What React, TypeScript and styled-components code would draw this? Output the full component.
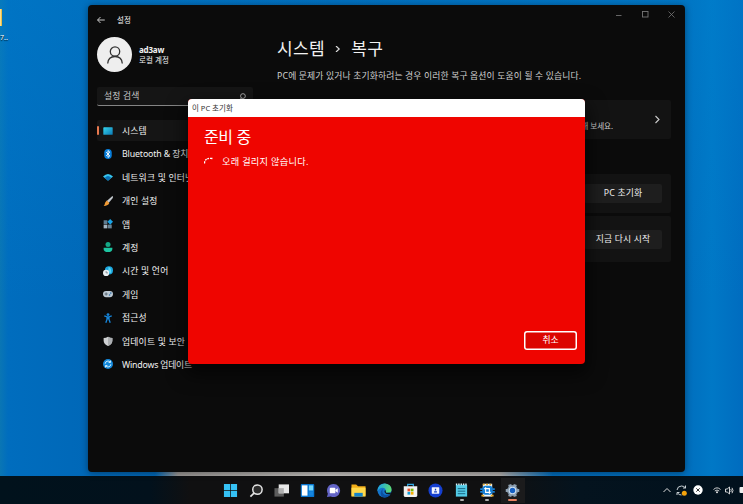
import React from 'react';
import styled, { createGlobalStyle } from 'styled-components';

const GlobalStyle = createGlobalStyle`
    * {
        box-sizing: border-box;
    }
    body {
        margin: 0;
        overflow: hidden;
        font-family: "Noto Sans", "Noto Sans CJK KR", sans-serif;
    }
    svg {
        display: block;
        flex: none;
    }
`;

const Desktop = styled.div`
    position: relative;
    display: flex;
    flex-direction: column;
    justify-content: flex-end;
    width: 743px;
    height: 504px;
    overflow: hidden;
    background:
        linear-gradient(90deg, rgba(170, 168, 167, 0) 155px, #9b9896 178px, #c4c1be 330px, #b3b0ae 500px, rgba(160, 165, 172, 0) 553px) 0 470px / 743px 6px no-repeat,
        linear-gradient(180deg, rgba(0, 130, 208, 0.35) 0, rgba(0, 110, 190, 0) 300px),
        linear-gradient(90deg, #0a76b4 0, #006dbe 8px, #0068b8 85px, #0066b6 350px, #0070bf 690px, #0078c6 712px, #006cbf 743px);
`;

const DesktopFile = styled.div`
    position: absolute;
    left: 0;
    top: 9px;
    width: 9px;
    color: #fff;
    font-size: 7px;
    line-height: 9px;
    text-shadow: 0 1px 1px #000;
`;

const FileThumb = styled.div`
    width: 2px;
    height: 17px;
    margin-bottom: 7px;
    background: #ffe08a;
    border-right: 1px solid #e9bd4a;
`;

const SettingsWindow = styled.section`
    position: absolute;
    left: 88px;
    top: 5px;
    display: flex;
    width: 597px;
    height: 467px;
    color: #f2f2f2;
    background: #0b0b0b;
    border-radius: 4px;
    box-shadow: 0 1px 7px rgba(0, 0, 0, 0.42);
`;

const Sidebar = styled.aside`
    width: 165px;
    padding: 9px 0 0 9px;
`;

const BackRow = styled.div`
    display: flex;
    align-items: center;
    gap: 12px;
    height: 12px;
    font-size: 7.5px;
    line-height: 12px;
`;

const Profile = styled.div`
    display: flex;
    align-items: center;
    gap: 7px;
    height: 35px;
    margin-top: 11px;
`;

const Avatar = styled.div`
    display: flex;
    align-items: center;
    justify-content: center;
    width: 35px;
    height: 35px;
    border-radius: 50%;
    background: #eee;
`;

const UserName = styled.div`
    font-size: 8px;
    font-weight: 700;
    line-height: 10px;
    letter-spacing: -0.2px;
`;

const UserKind = styled.div`
    font-size: 7.5px;
    line-height: 10px;
    letter-spacing: 0.1px;
`;

const SearchBox = styled.div`
    display: flex;
    align-items: center;
    justify-content: space-between;
    width: 156px;
    height: 19px;
    margin-top: 15px;
    padding: 0 7px 0 7px;
    color: #c9c9c9;
    font-size: 8.8px;
    line-height: 19px;
    letter-spacing: 0.15px;
    background: #151515;
    border-bottom: 1px solid #858585;
    border-radius: 2px;
`;

const Nav = styled.nav`
    display: flex;
    flex-direction: column;
    gap: 2.4px;
    margin-top: 14px;
`;

const NavItem = styled.div<{ $active?: boolean }>`
    display: flex;
    align-items: center;
    width: 156px;
    height: 21px;
    font-size: 8.8px;
    line-height: 20px;
    white-space: nowrap;
    border-radius: 2px;
    background: ${({ $active }) => ($active ? '#151515' : 'transparent')};

    &::before {
        content: "";
        width: 2px;
        height: 9px;
        margin-right: 4px;
        border-radius: 1px;
        background: ${({ $active }) => ($active ? '#e8794f' : 'transparent')};
    }
`;

const NavLabel = styled.span<{ $spacing?: number }>`
    margin: 1px 0 0 9px;
    letter-spacing: ${({ $spacing = 0.2 }) => $spacing}px;
`;

const Main = styled.main`
    flex: 1;
    padding: 5px 14px 0 24px;
`;

const CaptionButtons = styled.div`
    display: flex;
    justify-content: flex-end;
    align-items: center;
    gap: 19.500px;
    height: 8px;
    margin-right: -4px;
`;

const Title = styled.h1`
    display: flex;
    align-items: center;
    gap: 10px;
    height: 24px;
    margin: 19px 0 0;
    font-size: 17px;
    font-weight: 400;
    line-height: 24px;
    letter-spacing: 0.4px;
    white-space: nowrap;
`;

const Description = styled.p`
    height: 14px;
    margin: 8px 0 16.500px;
    color: #d0d0d0;
    font-size: 8.8px;
    line-height: 14px;
    letter-spacing: 0.15px;
    white-space: nowrap;
`;

const Card = styled.div<{ $height: number; $gap?: number }>`
    display: flex;
    align-items: center;
    justify-content: flex-end;
    height: ${({ $height }) => $height}px;
    margin-bottom: ${({ $gap = 0 }) => $gap}px;
    padding: 0 9px;
    background: #131313;
    border-radius: 2px;
`;

const CardHint = styled.span`
    margin: 13px 40px 0 0;
    color: #cfcfcf;
    font-size: 7.5px;
    line-height: 12px;
`;

const CardButton = styled.button`
    width: 78px;
    height: 19px;
    padding: 0;
    color: #f0f0f0;
    font: inherit;
    font-size: 8.8px;
    line-height: 19px;
    letter-spacing: 0.2px;
    background: #1e1e1e;
    border: 0;
    border-radius: 2px;
`;

const Dialog = styled.section`
    position: absolute;
    left: 188px;
    top: 99px;
    display: flex;
    flex-direction: column;
    width: 397px;
    height: 265px;
    overflow: hidden;
    color: #fff;
    background: #ef0500;
    border-radius: 4px;
    box-shadow: 0 8px 18px 3px rgba(0, 0, 0, 0.6);
`;

const DialogBar = styled.header`
    height: 18px;
    padding-left: 4px;
    color: #333;
    font-size: 7.5px;
    line-height: 18px;
    background: #fff;
`;

const DialogBody = styled.div`
    display: flex;
    flex: 1;
    flex-direction: column;
    padding: 8px 8px 14px 16px;
`;

const DialogTitle = styled.h2`
    margin: 0;
    font-size: 16px;
    font-weight: 400;
    line-height: 25px;
    letter-spacing: -0.4px;
`;

const Progress = styled.div`
    display: flex;
    align-items: center;
    gap: 8px;
    height: 14px;
    margin-top: 5px;
    font-size: 9.2px;
    line-height: 14px;
    letter-spacing: 0.28px;
`;

const CancelButton = styled.button`
    align-self: flex-end;
    width: 53px;
    height: 19px;
    margin-top: auto;
    padding: 0;
    color: #fff;
    font: inherit;
    font-size: 8.8px;
    line-height: 15px;
    background: #dc0500;
    border: 0;
    border-radius: 3px;
    box-shadow: inset 0 0 0 1.500px #fff;
`;

const Taskbar = styled.footer`
    display: flex;
    align-items: stretch;
    height: 28px;
    padding-left: 217.5px;
    background: linear-gradient(90deg, #01121c 0, #02111c 150px, #101011 190px, #101011 500px, #04131e 580px, #01111d 743px);
`;

const TaskItem = styled.div<{ $state?: 'open' | 'active' }>`
    position: relative;
    display: flex;
    align-items: center;
    justify-content: center;
    width: 25.7px;
    height: 28px;
    background: ${({ $state }) => ($state === 'active' ? 'linear-gradient(#1b1b1c, #1b1b1c) center / 24px 25px no-repeat' : 'none')};

    &::after {
        content: "";
        position: absolute;
        bottom: 3px;
        display: ${({ $state }) => ($state ? 'block' : 'none')};
        width: ${({ $state }) => ($state === 'active' ? 9 : 4)}px;
        height: 2px;
        border-radius: 1px;
        background: ${({ $state }) => ($state === 'active' ? '#e88362' : '#b0b0b0')};
    }
`;

const Tray = styled.div`
    display: flex;
    align-items: center;
    flex: none;
    margin-left: auto;
`;

const TrayGap = styled.span<{ $width: number }>`
    width: ${({ $width }) => $width}px;
`;

interface IconProps {
    size?: number;
    box?: number;
    children: React.ReactNode;
}

function Icon({ size = 10, box = 16, children }: IconProps) {
    return (
        <svg width={size} height={size} viewBox={`0 0 ${box} ${box}`} fill="none">
            {children}
        </svg>
    );
}

interface NavEntry {
    label: string;
    active?: boolean;
    spacing?: number;
    icon: React.ReactNode;
}

const navItems: NavEntry[] = [
    {
        label: '시스템',
        active: true,
        icon: (
            <>
                <defs>
                    <linearGradient id="screen" x1="0" y1="0" x2="1" y2="1">
                        <stop stopColor="#35d6ee" />
                        <stop offset="1" stopColor="#0b78b4" />
                    </linearGradient>
                </defs>
                <rect x="0.5" y="2" width="15" height="12" rx="1" fill="url(#screen)" />
            </>
        ),
    },
    {
        label: 'Bluetooth & 장치',
        spacing: -0.13,
        icon: (
            <>
                <rect x="2" width="12" height="16" rx="6" fill="#087edb" />
                <path d="M5 5l6 6-3 2.5v-11L11 5l-6 6" stroke="#fff" strokeWidth="1.4" />
            </>
        ),
    },
    {
        label: '네트워크 및 인터넷',
        icon: (
            <>
                <path d="M0 7Q8-1 16 7L8 14Z" fill="#37c5ef" />
                <path d="M3 9Q8 4 13 9L8 14Z" fill="#0870b6" />
            </>
        ),
    },
    {
        label: '개인 설정',
        icon: (
            <>
                <path d="M15 0Q17 1 15 4L9 11 6 8Z" fill="#c3c8cd" />
                <path d="M6 7l4 4q-1 4-9 5 2-2 2-4t3-5" fill="#f09a34" />
            </>
        ),
    },
    {
        label: '앱',
        icon: (
            <>
                <path d="M1 2h6v6H1z" fill="#607d91" />
                <path d="M1 9h6v6H1z" fill="#a3b5c2" />
                <path d="M8 9h6v6H8z" fill="#688293" />
                <path d="M11.5 0L16 4.5 11.500 9 7 4.500Z" fill="#18a3e6" />
            </>
        ),
    },
    {
        label: '계정',
        icon: (
            <>
                <circle cx="8" cy="4" r="4" fill="#14a886" />
                <path d="M1 9h14v2q0 5-7 5t-7-5Z" fill="#1dc5a1" />
            </>
        ),
    },
    {
        label: '시간 및 언어',
        icon: (
            <>
                <circle cx="9.500" cy="7" r="6.500" fill="#1aa6de" />
                <path d="M9 1q5 3 4 10l-5-1Z" fill="#56d3f1" />
                <circle cx="5" cy="11" r="5" fill="#e9eef1" />
                <path d="M5 8v3h3" stroke="#57636b" />
            </>
        ),
    },
    {
        label: '게임',
        icon: (
            <>
                <rect y="3" width="16" height="10" rx="5" fill="#bdc9d3" />
                <path d="M5 5.500v5M2.500 8h5" stroke="#52616d" strokeWidth="1.400" />
                <circle cx="10.500" cy="9.500" r="1.300" fill="#2d6fa8" />
                <circle cx="12.500" cy="6.500" r="1.300" fill="#2d6fa8" />
            </>
        ),
    },
    {
        label: '접근성',
        icon: (
            <>
                <circle cx="8" cy="2.500" r="2.300" fill="#1684d8" />
                <path d="M2 4.500l6 2 6-2M8 6v4M6.500 6v4L4.500 15.500M9.500 6v4l2 5.500" stroke="#1684d8" strokeWidth="2.200" />
            </>
        ),
    },
    {
        label: '업데이트 및 보안',
        icon: (
            <>
                <path d="M8 1q3 2 7 2v4q0 6-7 9Q1 13 1 7V3q4 0 7-2" fill="#cfd1d3" />
                <path d="M8 1q3 2 7 2v4q0 6-7 9Z" fill="#abaeb1" />
            </>
        ),
    },
    {
        label: 'Windows 업데이트',
        spacing: -0.2,
        icon: (
            <>
                <circle cx="8" cy="8" r="8" fill="#1489dc" />
                <path d="M3.500 7.500a4.500 4.500 0 018-2.500M12.500 8.500a4.500 4.500 0 01-8 2.500M12 2.500v3H9M4 13.500v-3h3" stroke="#d9f3ff" strokeWidth="1.500" />
            </>
        ),
    },
];

const taskItems: { name: string; state?: 'open' | 'active'; icon: React.ReactNode }[] = [
    {
        name: 'start',
        icon: <path d="M1 1h6.600v6.600H1zM8.400 1H15v6.600H8.400zM1 8.400h6.600V15H1zM8.400 8.400H15V15H8.400z" fill="#35c1f5" />,
    },
    {
        name: 'search',
        icon: (
            <>
                <circle cx="9" cy="7" r="5" fill="#2c2c2c" stroke="#e4e4e4" strokeWidth="1.600" />
                <path d="M5.300 10.700L1.500 14.500" stroke="#e4e4e4" strokeWidth="1.800" />
            </>
        ),
    },
    {
        name: 'taskview',
        icon: (
            <>
                <path d="M0.500 5.500h10v9h-10z" fill="#5d5d5d" />
                <path d="M5 1.500h11v9.500H5z" fill="#e8e8e8" />
                <path d="M5 5.500h5.500V11H5z" fill="#b0b0b0" />
            </>
        ),
    },
    {
        name: 'widgets',
        icon: (
            <>
                <rect x="0.800" y="1" width="14.400" height="14" rx="1" fill="#0875cf" />
                <path d="M2 2.500h6v11H2z" fill="#fff" />
                <path d="M9.500 2.500H14V8H9.500z" fill="#73d7fb" />
                <path d="M9.500 9H14v4.500H9.500z" fill="#1685df" />
            </>
        ),
    },
    {
        name: 'chat',
        icon: (
            <>
                <path d="M8 1a7 7 0 11-3 13.300L1 15l1-3.500A7 7 0 018 1" fill="#6263c5" />
                <rect x="4" y="5" width="6" height="6" rx="1" fill="#fff" />
                <path d="M10 7.500L12.500 5.500v5L10 8.500" fill="#fff" />
            </>
        ),
    },
    {
        name: 'explorer',
        icon: (
            <>
                <path d="M0.500 1.500h5l2 2h8v10h-15z" fill="#f2ad18" />
                <path d="M0.500 5h15v9.500h-15z" fill="#ffd84b" />
                <path d="M3.500 10.500h9v4h-9z" fill="#1683c9" />
            </>
        ),
    },
    {
        name: 'edge',
        icon: (
            <>
                <defs>
                    <linearGradient id="wave" x1="0" y1="0.300" x2="1" y2="0.500">
                        <stop stopColor="#1ca3e6" />
                        <stop offset="1" stopColor="#5fdc70" />
                    </linearGradient>
                </defs>
                <circle cx="8" cy="8" r="7.500" fill="#1373cb" />
                <path d="M0.600 7Q2 0.500 8.500 0.500q7 1 7 6.500 0 3.500-4 3.500-3 0-2-2Q9 5 6 5 2 5 0.600 9Z" fill="url(#wave)" />
                <path d="M6.500 6.500q-2 4 1.500 6 3 1 6-.5-2 3.500-6 3.500-5-1-4-6 .5-2 2.500-3" fill="#0d50a0" />
                <path d="M8.500 7.500q-1 1.500 0 3 1.500 2 5.500 1.500l1.500-1.500h-4q-3 0-2-2Z" fill="#10151b" />
            </>
        ),
    },
    {
        name: 'store',
        icon: (
            <>
                <path d="M5 4V1.500h6V4" stroke="#30a9e4" strokeWidth="1.300" />
                <path d="M0.800 3.500h14.400V13q0 2-2 2H2.800q-2 0-2-2z" fill="#f1f1f1" />
                <path d="M4.800 6h2.900v2.900H4.800z" fill="#ee4c27" />
                <path d="M8.300 6h2.900v2.900H8.300z" fill="#72b800" />
                <path d="M4.800 9.500h2.900v2.900H4.800z" fill="#149ed9" />
                <path d="M8.300 9.500h2.900v2.900H8.300z" fill="#f7ae00" />
            </>
        ),
    },
    {
        name: 'security',
        icon: (
            <>
                <circle cx="8" cy="8" r="7.500" fill="#153fd0" />
                <rect x="4" y="4.500" width="8" height="7" rx="0.500" fill="#f2f5ff" />
                <path d="M8 6v2M6.500 9.500h3" stroke="#153fc0" strokeWidth="1.400" />
            </>
        ),
    },
    {
        name: 'notepad',
        state: 'open',
        icon: (
            <>
                <path d="M2 2h12v12.500H2z" fill="#53cbe7" />
                <path d="M2 1.500h12" stroke="#d7f4fb" strokeWidth="2" strokeDasharray="1.500 1" />
                <path d="M4 6h8M4 8.700h8M4 11.400h8" stroke="#16627f" />
            </>
        ),
    },
    {
        name: 'capture',
        state: 'open',
        icon: (
            <>
                <path d="M3 0.800h10v13.700H3z" fill="#eef6fc" />
                <path d="M3 1.500h10" stroke="#e7a929" strokeWidth="1.600" strokeDasharray="2 1.500" />
                <path d="M1.500 13.500h3M11.500 13.500h3" stroke="#e7a929" strokeWidth="1.800" />
                <rect x="2.500" y="3" width="11" height="9.500" rx="3.500" fill="#1781d6" />
                <path d="M1.500 5.500v5M14.500 5.500v5" stroke="#1781d6" strokeWidth="2.500" strokeDasharray="2 1" />
                <path d="M6 4.500V10h5.500M4.500 6H10v5.500" stroke="#fff" strokeWidth="1.200" />
            </>
        ),
    },
    {
        name: 'settings',
        state: 'active',
        icon: (
            <>
                <circle cx="8" cy="8" r="5.800" fill="#7d91a4" />
                <path d="M5 1.500l1 3M11 1.500l-1 3M0.800 8H4M12 8h3.200M5 14.500l1-3M11 14.500l-1-3" stroke="#8fa1b2" strokeWidth="3.400" />
                <circle cx="8" cy="8" r="4" fill="#d2e2f1" />
                <circle cx="8" cy="8" r="2.900" fill="#155fc2" />
            </>
        ),
    },
];

function SettingsSidebar() {
    return (
        <Sidebar>
            <BackRow>
                <Icon size={8}>
                    <path d="M15.500 8H1.500M7 2L1 8l6 6" stroke="#ddd" strokeWidth="1.800" />
                </Icon>
                <span>설정</span>
            </BackRow>
            <Profile>
                <Avatar>
                    <Icon size={18} box={18}>
                        <circle cx="9" cy="5.500" r="4.700" stroke="#333" strokeWidth="1.300" />
                        <path d="M1.700 17.500q.5-7 7.300-7t7.300 7" stroke="#333" strokeWidth="1.300" />
                    </Icon>
                </Avatar>
                <div>
                    <UserName>ad3aw</UserName>
                    <UserKind>로컬 계정</UserKind>
                </div>
            </Profile>
            <SearchBox>
                <span>설정 검색</span>
                <Icon size={7}>
                    <circle cx="9" cy="7" r="5.500" stroke="#bbb" strokeWidth="2" />
                    <path d="M5.500 11L2.500 15" stroke="#bbb" strokeWidth="2" />
                </Icon>
            </SearchBox>
            <Nav>
                {navItems.map((item) => (
                    <NavItem key={item.label} $active={item.active}>
                        <Icon>{item.icon}</Icon>
                        <NavLabel $spacing={item.spacing}>{item.label}</NavLabel>
                    </NavItem>
                ))}
            </Nav>
        </Sidebar>
    );
}

function RecoveryPage() {
    return (
        <Main>
            <CaptionButtons>
                <Icon size={7} box={7}>
                    <path d="M1 4.500h5.500" stroke="#666" />
                </Icon>
                <Icon size={7} box={7}>
                    <rect x="0.500" y="0.500" width="5.500" height="5.500" stroke="#777" strokeWidth="0.900" />
                </Icon>
                <Icon size={7} box={7}>
                    <path d="M0.500 0.500l6 6M6.500 0.500l-6 6" stroke="#777" strokeWidth="0.800" />
                </Icon>
            </CaptionButtons>
            <Title>
                <span>시스템</span>
                <Icon size={6} box={6}>
                    <path d="M1 0L4.200 3 1 6" stroke="#ddd" strokeWidth="1.200" />
                </Icon>
                <span>복구</span>
            </Title>
            <Description>PC에 문제가 있거나 초기화하려는 경우 이러한 복구 옵션이 도움이 될 수 있습니다.</Description>
            <Card $height={39} $gap={35.5}>
                <CardHint>해 보세요.</CardHint>
                <Icon size={9} box={9}>
                    <path d="M2.500 1L6 4.500 2.500 8" stroke="#ccc" strokeWidth="1.100" />
                </Icon>
            </Card>
            <Card $height={39} $gap={3}>
                <CardButton>PC 초기화</CardButton>
            </Card>
            <Card $height={46}>
                <CardButton>지금 다시 시작</CardButton>
            </Card>
        </Main>
    );
}

function ResetDialog() {
    return (
        <Dialog>
            <DialogBar>이 PC 초기화</DialogBar>
            <DialogBody>
                <DialogTitle>준비 중</DialogTitle>
                <Progress>
                    <Icon size={10} box={10}>
                        <path d="M0.500 6.500Q0.500 0.500 8.500 1.500" stroke="#fff" strokeWidth="1.300" strokeDasharray="2 0.900" />
                    </Icon>
                    <span>오래 걸리지 않습니다.</span>
                </Progress>
                <CancelButton>취소</CancelButton>
            </DialogBody>
        </Dialog>
    );
}

function SystemTray() {
    return (
        <Tray>
            <Icon size={8} box={8}>
                <path d="M0.500 6L4 2.500 7.500 6" stroke="#ddd" />
            </Icon>
            <TrayGap $width={5} />
            <Icon size={11} box={11}>
                <path d="M1 5q.5-4 4.500-4 2.500 0 4 2M9.500 0.500V3H7M1 10V7.500h2.500M1.500 8q1.500 2 4 2" stroke="#c9d0d4" />
                <circle cx="8.300" cy="8.300" r="2.500" fill="#f5a30c" />
            </Icon>
            <TrayGap $width={5.5} />
            <Icon size={10} box={10}>
                <circle cx="5" cy="5" r="4.700" fill="#fff" />
                <path d="M3.300 3.300l3.400 3.400M6.700 3.300L3.300 6.700" stroke="#333" />
            </Icon>
            <TrayGap $width={10} />
            <Icon size={8} box={8}>
                <path d="M0.500 3.500Q4 0.200 7.500 3.500M1.800 5Q4 3 6.200 5" stroke="#e5e5e5" strokeWidth="0.900" />
                <circle cx="4" cy="6.300" r="1" fill="#e5e5e5" />
            </Icon>
            <TrayGap $width={4.5} />
            <Icon size={9} box={9}>
                <path d="M0.500 3h1.700L4.500 1v7L2.200 6H0.500ZM5.800 3q1 1.500 0 3M7 1.800q2 2.700 0 5.400" stroke="#e5e5e5" strokeWidth="0.900" />
            </Icon>
            <TrayGap $width={5} />
            <svg width="4" height="6" viewBox="0 0 4 6">
                <rect x="0.500" width="6" height="6" rx="1" fill="#eee" />
            </svg>
        </Tray>
    );
}

function App() {
    return (
        <>
            <GlobalStyle />
            <Desktop>
                <DesktopFile>
                    <FileThumb />
                    7..
                </DesktopFile>
                <SettingsWindow>
                    <SettingsSidebar />
                    <RecoveryPage />
                </SettingsWindow>
                <ResetDialog />
                <Taskbar>
                    {taskItems.map((item) => (
                        <TaskItem key={item.name} $state={item.state}>
                            <Icon size={15}>{item.icon}</Icon>
                        </TaskItem>
                    ))}
                    <SystemTray />
                </Taskbar>
            </Desktop>
        </>
    );
}

export default App;
